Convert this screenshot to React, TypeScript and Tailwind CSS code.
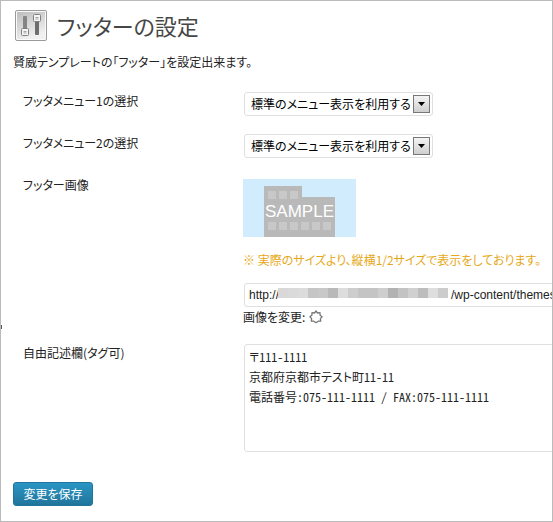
import type { ReactNode } from "react"

const menuOptions = ["標準のメニュー表示を利用する", "カスタムメニューを利用する"]

const mosaic = [
    "bg-[#d8d8d8]", "bg-[#dadada]", "bg-[#dcdcdc]", "bg-[#c5c5c5]", "bg-[#c8c8c8]", "bg-[#b9b9b9]",
    "bg-[#dddddd]", "bg-[#cdcdcd]", "bg-[#c4c4c4]", "bg-[#c4c4c4]", "bg-[#cecece]", "bg-[#b2b2b2]",
    "bg-[#c3c3c3]", "bg-[#d0d0d0]", "bg-[#bdbdbd]", "bg-[#dedede]", "bg-[#cccccc]",
]

const address = "〒111-1111\n京都府京都市テスト町11-11\n電話番号：075-111-1111 / FAX：075-111-1111"

// host part is left blank, it is hidden under the mosaic
const imageUrl = "http://" + "\u2003".repeat(14) + "\u2004/wp-content/themes/keni/images/footer.png"

function SettingsIcon() {
    return (
        <svg width="32" height="31" viewBox="0 0 32 31" aria-hidden="true">
            <defs>
                <linearGradient id="plate" x1="0" y1="0" x2="0.4" y2="1">
                    <stop offset="0" stopColor="#bdbdbd" />
                    <stop offset="1" stopColor="#f0f0f0" />
                </linearGradient>
            </defs>
            <rect x="0.5" y="0.5" width="31" height="30" rx="1.5" fill="#fafafa" stroke="#9a9a9a" />
            <rect x="2" y="2" width="28" height="27" fill="url(#plate)" />
            <rect x="8" y="6" width="4" height="16" rx="1" fill="#858585" />
            <rect x="20" y="9" width="4" height="16" rx="1" fill="#6e6e6e" />
            <rect x="6.5" y="18.5" width="7" height="7" rx="1" fill="#f6f6f6" stroke="#808080" />
            <path d="M8.5 21.5h3M8.5 23h3" stroke="#a5a5a5" />
            <rect x="18.5" y="4.5" width="7" height="7" rx="1" fill="#f6f6f6" stroke="#808080" />
            <path d="M20.5 7.5h3M20.5 9h3" stroke="#a5a5a5" />
        </svg>
    )
}

function SampleImage() {
    return (
        <svg width="113" height="58" viewBox="0 0 113 58" role="img" aria-label="フッター画像" className="block">
            <rect width="113" height="58" fill="#d0ecfd" />
            <path d="M21 7h38v11h33v40H21z" fill="#b9b9b9" />
            <g fill="#c8c8c8">
                <path d="M25 12h8v8h-8zM36 12h8v8h-8zM47 12h8v8h-8z" />
                <path d="M25 43h8v8h-8zM36 43h8v8h-8zM47 43h8v8h-8zM58 43h8v8h-8zM69 43h8v8h-8zM80 43h8v8h-8z" />
            </g>
            <text x="56.5" y="38" textAnchor="middle" fontSize="17" fill="#fff" className="font-['Liberation_Sans',sans-serif]">SAMPLE</text>
        </svg>
    )
}

function GearIcon() {
    return (
        <svg width="14" height="14" viewBox="0 0 14 14" fill="none" stroke="#777" strokeWidth="1.3" strokeLinejoin="round" aria-hidden="true">
            <path d="M7 1l1.5 2 2.5-.3.1 2.500 2 1.600-1.700 1.800.3 2.500-2.500.1L7 12.700l-2.200-1.500-2.500-.1.3-2.500L.9 6.800l2-1.600.1-2.500 2.500.3z" />
        </svg>
    )
}

function Row({ label, htmlFor, children }: { label: string; htmlFor: string; children: ReactNode }) {
    return (
        <div className="grid grid-cols-[220px_1fr]">
            <label htmlFor={htmlFor} className="pt-px leading-4">{label}</label>
            <div>{children}</div>
        </div>
    )
}

function MenuSelect({ id }: { id: string }) {
    return (
        <div className="relative ml-px inline-block align-top">
            <select id={id} className="block h-6 w-[189px] appearance-none rounded-[3px] border border-[#dfdfdf] bg-white pl-1.5 text-black">
                {menuOptions.map((name) => (
                    <option key={name}>{name}</option>
                ))}
            </select>
            <span className="pointer-events-none absolute top-[3px] right-[3px] flex h-[18px] w-[17px] items-center justify-center border border-[#777] bg-linear-to-b from-[#f4f4f4] to-[#cfcfcf]">
                <svg width="7" height="4" viewBox="0 0 7 4" aria-hidden="true">
                    <path d="M0 0h7L3.5 4z" fill="#000" />
                </svg>
            </span>
        </div>
    )
}

function App() {
    return (
        <div className="relative min-h-screen overflow-hidden border border-[#bbb] bg-white pl-3 font-['Noto_Sans_CJK_JP',sans-serif] text-xs text-[#222] [font-feature-settings:'palt']">
            {/* edge of the collapsed side menu */}
            <span className="absolute top-[324px] left-0 h-1 w-px bg-[#555]"></span>

            <div className="flex items-center gap-2.5 pt-2 pl-0.5">
                <SettingsIcon />
                <h1 className="text-[22px] leading-8 text-[#464646]">フッターの設定</h1>
            </div>
            <p className="mt-[11px] leading-5">賢威テンプレートの「フッター」を設定出来ます。</p>

            <form>
                <div className="flex flex-col gap-[18px] pt-5 pl-2.5">
                    <Row label="フッタメニュー1の選択" htmlFor="menu1">
                        <MenuSelect id="menu1" />
                    </Row>
                    <Row label="フッタメニュー2の選択" htmlFor="menu2">
                        <MenuSelect id="menu2" />
                    </Row>
                    <Row label="フッター画像" htmlFor="image">
                        <div className="pt-[3px]">
                            <SampleImage />
                        </div>
                        <p className="mt-[13px] leading-5 whitespace-nowrap text-[#e6a817]">※ 実際のサイズより、縦横1/2サイズで表示をしております。</p>
                        <div className="relative mt-[13px] ml-px">
                            <input id="image" type="text" defaultValue={imageUrl} className="block h-6 w-[500px] rounded-[3px] border border-[#dfdfdf] pl-1 font-['Liberation_Sans',sans-serif]" />
                            <div className="absolute top-[5px] left-[34px] flex">
                                {mosaic.map((color, i) => (
                                    <span key={i} className={`h-2.5 w-2.5 ${color}`}></span>
                                ))}
                            </div>
                        </div>
                        <div className="flex items-center gap-1 leading-[19px]">
                            <span>画像を変更:</span>
                            <GearIcon />
                        </div>
                    </Row>
                    <Row label="自由記述欄(タグ可)" htmlFor="free">
                        <textarea id="free" defaultValue={address} className="ml-px block h-[108px] w-[500px] resize-none rounded-[3px] border border-[#dfdfdf] px-1 py-0.5 leading-5 [font-feature-settings:'palt','hwid']" />
                    </Row>
                </div>
                <button type="button" className="mt-[30px] h-6 w-20 rounded-[3px] border border-[#21759b] bg-linear-to-b from-[#2a95c5] to-[#21759b] text-white">変更を保存</button>
            </form>
        </div>
    )
}

export default App
